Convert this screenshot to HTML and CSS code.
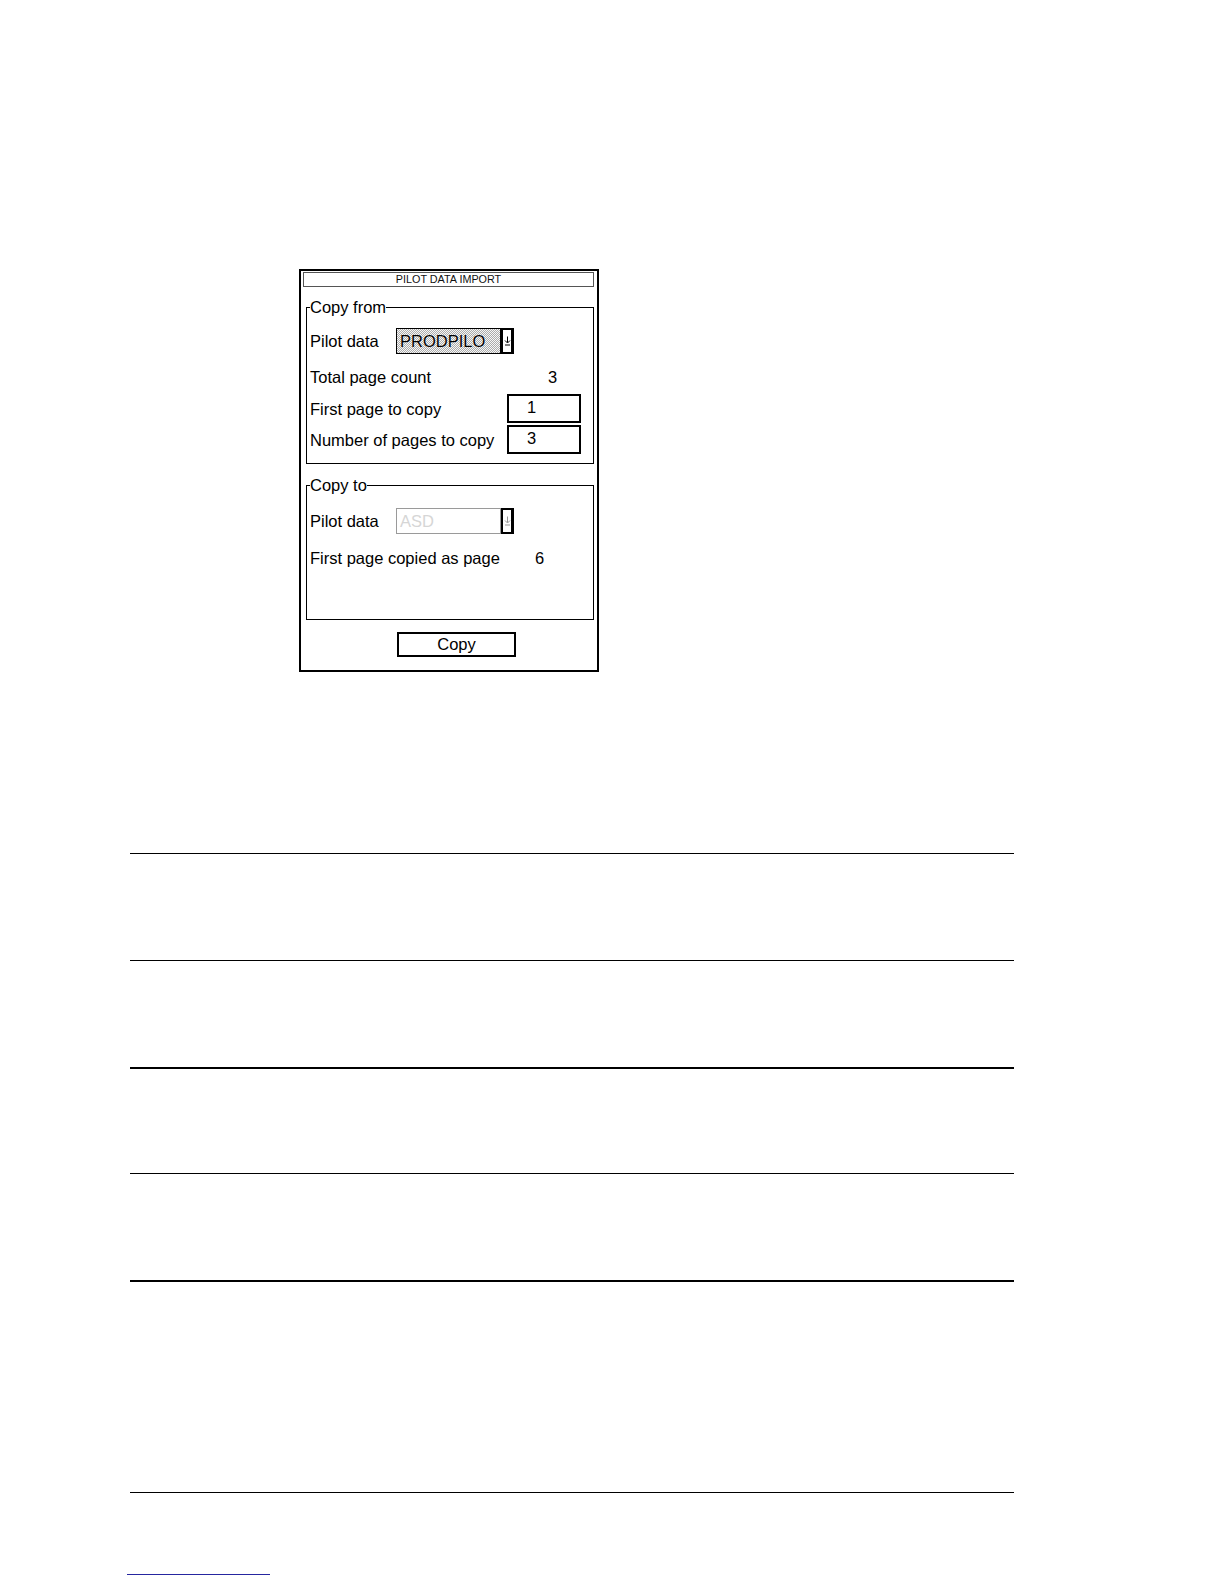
FILE: index.html
```html
<!DOCTYPE html>
<html lang="en">
<head>
<meta charset="utf-8">
<title>Pilot Data Import</title>
<link rel="stylesheet" href="styles.css">
</head>
<body>
<main class="page">
  <section class="dialog">
    <h1 class="dialog-title">PILOT DATA IMPORT</h1>

    <fieldset class="group group-from">
      <legend>Copy from</legend>
      <div class="row row-select">
        <span class="label w-select">Pilot data</span>
        <div class="combo">
          <span class="combo-value">PRODPILO</span>
          <span class="combo-btn">
            <svg class="arrow" width="7" height="10" viewBox="0 0 7 10"><path d="M3.5 0.5V6.5M1 4.5L3.5 7L6 4.5M1 9H6" fill="none" stroke="#000" stroke-width="1"/></svg>
          </span>
        </div>
      </div>
      <div class="row row-text mt-13">
        <span class="label w-total">Total page count</span>
        <span class="value">3</span>
      </div>
      <div class="row row-input mt-7">
        <span class="label w-field">First page to copy</span>
        <span class="field">1</span>
      </div>
      <div class="row row-input mt-2">
        <span class="label w-field">Number of pages to copy</span>
        <span class="field">3</span>
      </div>
    </fieldset>

    <fieldset class="group group-to">
      <legend>Copy to</legend>
      <div class="row row-select">
        <span class="label w-select">Pilot data</span>
        <div class="combo combo-disabled">
          <span class="combo-value">ASD</span>
          <span class="combo-btn">
            <svg class="arrow" width="7" height="10" viewBox="0 0 7 10"><path d="M3.5 0.5V6.5M1 4.5L3.5 7L6 4.5M1 9H6" fill="none" stroke="#999" stroke-width="1"/></svg>
          </span>
        </div>
      </div>
      <div class="row row-text mt-14">
        <span class="label w-copied">First page copied as page</span>
        <span class="value">6</span>
      </div>
    </fieldset>

    <div class="actions">
      <button class="btn" type="button">Copy</button>
    </div>
  </section>

  <div class="rules">
    <div class="rule h-107"></div>
    <div class="rule h-107"></div>
    <div class="rule thick h-106"></div>
    <div class="rule h-107"></div>
    <div class="rule thick h-212"></div>
    <div class="rule last"></div>
  </div>

  <div class="footnote-rule"></div>
</main>
</body>
</html>
```

FILE: styles.css
```css
* {
  box-sizing: border-box;
}

html, body {
  margin: 0;
  padding: 0;
  background: #fff;
}

body {
  font-family: "Liberation Sans", Arial, sans-serif;
  color: #000;
}

.page {
  padding-top: 269px;
  padding-bottom: 9px;
}

/* ---------- dialog ---------- */
.dialog {
  margin-left: 299px;
  width: 300px;
  border: 2px solid #000;
  padding: 1px 2px 13px 0;
  display: flex;
  flex-direction: column;
}

.dialog-title {
  margin: 0 0 0 2px;
  width: 291px;
  height: 15px;
  border: 1px solid #555;
  font-size: 10.8px;
  font-weight: normal;
  line-height: 13px;
  text-align: center;
  color: #111;
}

.group {
  margin: 10px 0 0 5px;
  width: 288px;
  min-width: 0;
  border: 1px solid #000;
  padding: 0 3px;
  font-size: 16.5px;
  line-height: 20px;
}

.group legend {
  padding: 0;
  margin: 0;
  line-height: 20px;
}

.group-from {
  padding-top: 11px;
  padding-bottom: 9px;
}

.group-to {
  margin-top: 11px;
  padding-top: 13px;
  padding-bottom: 51px;
}

.row {
  display: flex;
  align-items: center;
}

.row-select { height: 26px; }
.row-text { height: 20px; }
.row-input { height: 29px; }

.mt-2 { margin-top: 2px; }
.mt-7 { margin-top: 7px; }
.mt-13 { margin-top: 13px; }
.mt-14 { margin-top: 14px; }

.label {
  flex: none;
  white-space: nowrap;
}

.w-select { width: 86px; }
.w-total { width: 238px; }
.w-field { width: 197px; }
.w-copied { width: 225px; }

/* combo box */
.combo {
  display: flex;
  width: 118px;
  height: 26px;
}

.combo-value {
  flex: 1;
  border: 1px solid #000;
  padding-left: 3px;
  line-height: 24px;
  background-color: #dcdcdc;
  background-image: repeating-conic-gradient(#ababab 0 25%, #f7f7f7 0 50%);
  background-size: 2px 2px;
  text-shadow: 0 0 1px #fff;
}

.combo-btn {
  flex: none;
  width: 13px;
  border: 2px solid #000;
  border-right-width: 3px;
  background: #fff;
  display: flex;
  align-items: center;
  justify-content: center;
}

.arrow {
  display: block;
}

.combo-disabled .combo-value {
  border-color: #9a9a9a;
  background: #fff;
  color: #d6d6d6;
  text-shadow: none;
}

/* numeric field */
.field {
  flex: none;
  width: 74px;
  height: 29px;
  border: 2px solid #000;
  padding-left: 18px;
  line-height: 23px;
}

/* action button */
.actions {
  margin-top: 12px;
  display: flex;
}

.btn {
  margin-left: 96px;
  width: 119px;
  height: 25px;
  border: 2px solid #000;
  background: #fff;
  padding: 0;
  font-family: "Liberation Sans", Arial, sans-serif;
  font-size: 16.5px;
  line-height: 21px;
  color: #000;
}

/* ---------- horizontal rules ---------- */
.rules {
  margin: 181px 0 0 130px;
  width: 884px;
  display: flex;
  flex-direction: column;
}

.rule {
  border-top: 1px solid #000;
}

.rule.thick {
  border-top-width: 2px;
}

.h-106 { height: 106px; }
.h-107 { height: 107px; }
.h-212 { height: 212px; }

.rule.last {
  height: 1px;
}

.footnote-rule {
  margin: 81px 0 0 127px;
  width: 143px;
  border-top: 1px solid #2626a0;
}
```
